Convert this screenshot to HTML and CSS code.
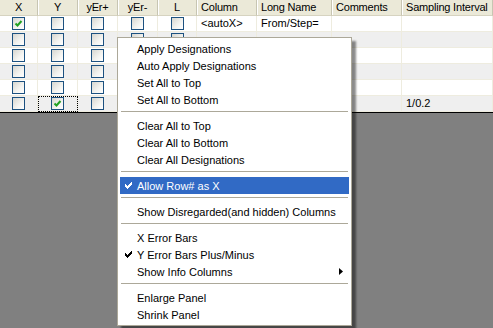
FILE: index.html
```html
<html>

<head>
  <link rel="stylesheet" href="styles.css">
</head>

<body>
  <div class="sheet">
    <div class="row head">
      <div class="cell mid">X</div>
      <div class="cell mid">Y</div>
      <div class="cell mid">yEr+</div>
      <div class="cell mid">yEr-</div>
      <div class="cell mid">L</div>
      <div class="cell">Column</div>
      <div class="cell">Long Name</div>
      <div class="cell">Comments</div>
      <div class="cell">Sampling Interval</div>
    </div>

    <div class="row">
      <div class="cell mid"><span class="cb"><svg width="9" height="9" viewBox="0 0 9 9"><polyline points="1.5,4.5 3.5,6.5 7.5,2" /></svg></span></div>
      <div class="cell mid"><span class="cb"></span></div>
      <div class="cell mid"><span class="cb"></span></div>
      <div class="cell mid"><span class="cb"></span></div>
      <div class="cell mid"><span class="cb"></span></div>
      <div class="cell">&lt;autoX&gt;</div>
      <div class="cell">From/Step=</div>
      <div class="cell"></div>
      <div class="cell"></div>
    </div>
    <div class="row alt">
      <div class="cell mid"><span class="cb"></span></div>
      <div class="cell mid"><span class="cb"></span></div>
      <div class="cell mid"><span class="cb"></span></div>
      <div class="cell mid"><span class="cb"></span></div>
      <div class="cell mid"><span class="cb"></span></div>
      <div class="cell"></div>
      <div class="cell"></div>
      <div class="cell"></div>
      <div class="cell"></div>
    </div>
    <div class="row">
      <div class="cell mid"><span class="cb"></span></div>
      <div class="cell mid"><span class="cb"></span></div>
      <div class="cell mid"><span class="cb"></span></div>
      <div class="cell mid"><span class="cb"></span></div>
      <div class="cell mid"><span class="cb"></span></div>
      <div class="cell"></div>
      <div class="cell"></div>
      <div class="cell"></div>
      <div class="cell"></div>
    </div>
    <div class="row alt">
      <div class="cell mid"><span class="cb"></span></div>
      <div class="cell mid"><span class="cb"></span></div>
      <div class="cell mid"><span class="cb"></span></div>
      <div class="cell mid"><span class="cb"></span></div>
      <div class="cell mid"><span class="cb"></span></div>
      <div class="cell"></div>
      <div class="cell"></div>
      <div class="cell"></div>
      <div class="cell"></div>
    </div>
    <div class="row">
      <div class="cell mid"><span class="cb"></span></div>
      <div class="cell mid"><span class="cb"></span></div>
      <div class="cell mid"><span class="cb"></span></div>
      <div class="cell mid"><span class="cb"></span></div>
      <div class="cell mid"><span class="cb"></span></div>
      <div class="cell"></div>
      <div class="cell"></div>
      <div class="cell"></div>
      <div class="cell"></div>
    </div>
    <div class="row alt last">
      <div class="cell mid"><span class="cb"></span></div>
      <div class="cell mid focus"><span class="cb"><svg width="9" height="9" viewBox="0 0 9 9"><polyline points="1.5,4.5 3.5,6.5 7.5,2" /></svg></span></div>
      <div class="cell mid"><span class="cb"></span></div>
      <div class="cell mid"><span class="cb"></span></div>
      <div class="cell mid"><span class="cb"></span></div>
      <div class="cell"></div>
      <div class="cell"></div>
      <div class="cell"></div>
      <div class="cell">1/0.2</div>
    </div>
  </div>

  <!-- context menu -->
  <div class="menu">
    <div class="item"><span class="mark"></span>Apply Designations</div>
    <div class="item"><span class="mark"></span>Auto Apply Designations</div>
    <div class="item"><span class="mark"></span>Set All to Top</div>
    <div class="item"><span class="mark"></span>Set All to Bottom</div>
    <div class="sep"></div>
    <div class="item"><span class="mark"></span>Clear All to Top</div>
    <div class="item"><span class="mark"></span>Clear All to Bottom</div>
    <div class="item"><span class="mark"></span>Clear All Designations</div>
    <div class="sep"></div>
    <div class="item active"><span class="mark"><svg width="7" height="7" viewBox="0 0 7 7"><path d="M0 2h1v1h1v1h1v-1h1v-1h1v-1h1v-1h1v3h-1v1h-1v1h-1v1h-1v1h-1v-1h-1v-1h-1z" /></svg></span>Allow Row# as X</div>
    <div class="sep"></div>
    <div class="item"><span class="mark"></span>Show Disregarded(and hidden) Columns</div>
    <div class="sep"></div>
    <div class="item"><span class="mark"></span>X Error Bars</div>
    <div class="item"><span class="mark"><svg width="7" height="7" viewBox="0 0 7 7"><path d="M0 2h1v1h1v1h1v-1h1v-1h1v-1h1v-1h1v3h-1v1h-1v1h-1v1h-1v1h-1v-1h-1v-1h-1z" /></svg></span>Y Error Bars Plus/Minus</div>
    <div class="item"><span class="mark"></span><span class="label">Show Info Columns</span><svg class="arrow" width="4" height="7" viewBox="0 0 4 7"><polygon points="0,0 4,3.5 0,7" /></svg></div>
    <div class="sep"></div>
    <div class="item"><span class="mark"></span>Enlarge Panel</div>
    <div class="item"><span class="mark"></span>Shrink Panel</div>
  </div>
</body>

</html>
```

FILE: styles.css
```css
/* worksheet designation panel */
body {
  margin: 0;
  font-family: "Liberation Sans", Arial, sans-serif;
  font-size: 11px;
  color: #000;
  background: #808080;
  height: 328px;
  overflow: hidden;
}

.sheet {
  background: #fff;
  border-bottom: 1px solid #000;
}

.row {
  display: grid;
  grid-template-columns: 38px 40px 40px 40px 39px 60px 75px 70px 91px;
  height: 16px;
}

.row.alt {
  background: #efefef;
}

.cell {
  border-right: 1px solid #eeecdf;
  border-bottom: 1px solid #eeecdf;
  padding-left: 4px;
  line-height: 15px;
  white-space: nowrap;
  overflow: hidden;
  position: relative;
}

.cell.mid {
  padding-left: 0;
  display: flex;
  justify-content: center;
  align-items: center;
}

/* header */
.head {
  background: #ebe9d8;
}

.head .cell {
  border-right: 1px solid #c7c5b2;
  border-bottom: 1px solid #d6d3c0;
  box-shadow: inset 1px 0 #fff;
  letter-spacing: -0.2px;
}

.head .cell:first-child {
  box-shadow: none;
}

/* checkbox */
.cb {
  box-sizing: border-box;
  width: 13px;
  height: 13px;
  border: 1px solid #1c5180;
  background: linear-gradient(135deg, #d6d6d0 0%, #f4f4f1 60%, #ffffff 100%);
  display: flex;
  align-items: center;
  justify-content: center;
}

.cb svg polyline {
  fill: none;
  stroke: #21a121;
  stroke-width: 2;
}

.focus {
  outline: 1px dotted #000;
  outline-offset: -1px;
}

/* context menu */
.menu {
  position: absolute;
  left: 117px;
  top: 37px;
  width: 235px;
  box-sizing: border-box;
  background: #fff;
  border: 1px solid #aca899;
  padding: 2px;
  box-shadow: 4px 4px 2px rgba(0, 0, 0, 0.45);
}

.item {
  display: flex;
  align-items: center;
  height: 17px;
  white-space: nowrap;
}

.item.active {
  background: #316ac5;
  color: #fff;
}

.mark {
  width: 17px;
  flex: none;
  display: flex;
  justify-content: center;
  align-items: center;
}

.mark svg path {
  fill: #000;
}

.active .mark svg path {
  fill: #fff;
}

.label {
  flex: 1;
}

.arrow {
  margin-right: 6px;
}

.sep {
  height: 1px;
  margin: 3px 1px 5px;
  background: #aca899;
}
```
